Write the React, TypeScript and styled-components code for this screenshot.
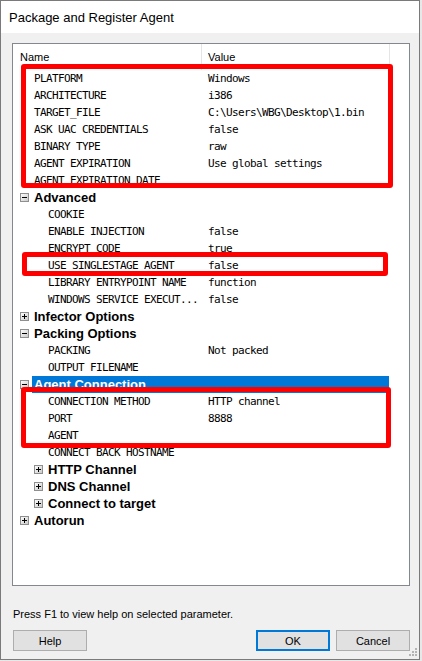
import React from 'react';
import styled, { createGlobalStyle } from 'styled-components';

const GlobalStyle = createGlobalStyle`
  html, body { margin: 0; padding: 0; background: #e8e8e8; }
  * { box-sizing: border-box; }
`;

const Stage = styled.div`
  position: relative;
  width: 422px;
  height: 661px;
  overflow: hidden;
  background: #e8e8e8;
`;

const Window = styled.div`
  position: relative;
  width: 420px;
  height: 660px;
  border: 1px solid #7a7a7a;
  background: #f0f0f0;
  display: flex;
  flex-direction: column;
  font-family: "Liberation Sans", Arial, sans-serif;
  color: #000;
`;

const TitleBar = styled.div`
  flex: none;
  height: 32px;
  background: #fff;
  display: flex;
  align-items: center;
  padding-left: 8px;
  font-size: 13px;
`;

const Body = styled.div`
  flex: 1;
  padding: 10px 9px 0 11px;
  display: flex;
  flex-direction: column;
`;

const Panel = styled.div`
  flex: none;
  height: 543px;
  border: 1px solid #828790;
  background: #fff;
  display: flex;
  flex-direction: column;
  overflow: hidden;
`;

const Header = styled.div`
  flex: none;
  display: flex;
  height: 26px;
  font-size: 11px;
  line-height: 13px;
`;

const HeaderCell = styled.div<{ $w?: number; $pad: number }>`
  ${p => (p.$w ? `width: ${p.$w}px;` : 'flex: 1;')}
  padding: 7px 0 0 ${p => p.$pad}px;
  border-right: ${p => (p.$w ? '1px solid #e5e5e5' : 'none')};
`;

const Row = styled.div<{ $level: number }>`
  flex: none;
  display: flex;
  height: 17px;
  padding-left: ${p => 7 + 14 * p.$level}px;
`;

const ToggleSlot = styled.div`
  flex: none;
  width: 12px;
  display: flex;
  align-items: center;
`;

const Cells = styled.div<{ $selected?: boolean }>`
  flex: 1;
  display: flex;
  padding-left: 2px;
  background: ${p => (p.$selected ? '#0078d7' : 'transparent')};
  color: ${p => (p.$selected ? '#fff' : '#000')};
`;

const NameText = styled.div<{ $category?: boolean }>`
  flex: 1;
  white-space: nowrap;
  overflow: visible;
  line-height: 17px;
  ${p =>
    p.$category
      ? `font-family: "Liberation Sans", Arial, sans-serif; font-weight: bold; font-size: 13px;`
      : `font-family: "DejaVu Sans Mono", "Liberation Mono", monospace; font-size: 11px; letter-spacing: -0.62px;`}
`;

const ValueText = styled.div`
  flex: none;
  width: 187px;
  padding-left: 6px;
  white-space: nowrap;
  line-height: 17px;
  font-family: "DejaVu Sans Mono", "Liberation Mono", monospace;
  font-size: 11px;
  letter-spacing: -0.62px;
`;

const TrailCol = styled.div`
  flex: none;
  width: 20px;
`;

const Hint = styled.div`
  margin-top: 21px;
  font-size: 11px;
  line-height: 14px;
  padding-left: 1px;
`;

const ButtonRow = styled.div`
  display: flex;
  gap: 6px;
  margin-top: 9px;
  padding-left: 1px;
  width: 398px;
`;

const Spacer = styled.div`
  flex: 1;
`;

const Button = styled.button<{ $default?: boolean }>`
  flex: none;
  width: 74px;
  height: 21px;
  padding: 0;
  background: #e1e1e1;
  border: 1px solid ${p => (p.$default ? '#0078d7' : '#adadad')};
  box-shadow: ${p => (p.$default ? 'inset 0 0 0 1px #0078d7' : 'none')};
  font-family: "Liberation Sans", Arial, sans-serif;
  font-size: 11px;
  color: #000;
`;

const Grip = styled.svg`
  position: absolute;
  right: 1px;
  bottom: 2px;
`;

const Mark = styled.div<{ $l: number; $t: number; $w: number; $h: number }>`
  position: absolute;
  left: ${p => p.$l}px;
  top: ${p => p.$t}px;
  width: ${p => p.$w}px;
  height: ${p => p.$h}px;
  border: 5px solid #ff0000;
  border-radius: 3px;
  pointer-events: none;
`;

const Expander: React.FC<{ open: boolean }> = ({ open }) => (
  <svg width="9" height="9" viewBox="0 0 9 9">
    <defs>
      <linearGradient id="expg" x1="0" y1="0" x2="1" y2="1">
        <stop offset="0" stopColor="#ffffff" />
        <stop offset="1" stopColor="#c8c8c8" />
      </linearGradient>
    </defs>
    <rect x="0.5" y="0.5" width="8" height="8" fill="url(#expg)" stroke="#8f8f8f" />
    <path d="M2 4.5h5" stroke="#000" strokeWidth="1" />
    {!open && <path d="M4.5 2v5" stroke="#000" strokeWidth="1" />}
  </svg>
);

type Item =
  | { kind: 'prop'; level: number; name: string; value?: string }
  | { kind: 'cat'; level: number; name: string; open: boolean; selected?: boolean };

const items: Item[] = [
  { kind: 'prop', level: 0, name: 'PLATFORM', value: 'Windows' },
  { kind: 'prop', level: 0, name: 'ARCHITECTURE', value: 'i386' },
  { kind: 'prop', level: 0, name: 'TARGET_FILE', value: 'C:\\Users\\WBG\\Desktop\\1.bin' },
  { kind: 'prop', level: 0, name: 'ASK UAC CREDENTIALS', value: 'false' },
  { kind: 'prop', level: 0, name: 'BINARY TYPE', value: 'raw' },
  { kind: 'prop', level: 0, name: 'AGENT EXPIRATION', value: 'Use global settings' },
  { kind: 'prop', level: 0, name: 'AGENT EXPIRATION DATE', value: '' },
  { kind: 'cat', level: 0, name: 'Advanced', open: true },
  { kind: 'prop', level: 1, name: 'COOKIE', value: '' },
  { kind: 'prop', level: 1, name: 'ENABLE INJECTION', value: 'false' },
  { kind: 'prop', level: 1, name: 'ENCRYPT CODE', value: 'true' },
  { kind: 'prop', level: 1, name: 'USE SINGLESTAGE AGENT', value: 'false' },
  { kind: 'prop', level: 1, name: 'LIBRARY ENTRYPOINT NAME', value: 'function' },
  { kind: 'prop', level: 1, name: 'WINDOWS SERVICE EXECUT...', value: 'false' },
  { kind: 'cat', level: 0, name: 'Infector Options', open: false },
  { kind: 'cat', level: 0, name: 'Packing Options', open: true },
  { kind: 'prop', level: 1, name: 'PACKING', value: 'Not packed' },
  { kind: 'prop', level: 1, name: 'OUTPUT FILENAME', value: '' },
  { kind: 'cat', level: 0, name: 'Agent Connection', open: true, selected: true },
  { kind: 'prop', level: 1, name: 'CONNECTION METHOD', value: 'HTTP channel' },
  { kind: 'prop', level: 1, name: 'PORT', value: '8888' },
  { kind: 'prop', level: 1, name: 'AGENT', value: '' },
  { kind: 'prop', level: 1, name: 'CONNECT BACK HOSTNAME', value: '' },
  { kind: 'cat', level: 1, name: 'HTTP Channel', open: false },
  { kind: 'cat', level: 1, name: 'DNS Channel', open: false },
  { kind: 'cat', level: 1, name: 'Connect to target', open: false },
  { kind: 'cat', level: 0, name: 'Autorun', open: false },
];

export default function App() {
  return (
    <Stage>
      <GlobalStyle />
      <Window>
        <TitleBar>Package and Register Agent</TitleBar>
        <Body>
          <Panel>
            <Header>
              <HeaderCell $w={189} $pad={7}>Name</HeaderCell>
              <HeaderCell $w={188} $pad={6}>Value</HeaderCell>
              <HeaderCell $pad={0} />
            </Header>
            {items.map((it, i) => (
              <Row key={i} $level={it.level}>
                <ToggleSlot>{it.kind === 'cat' && <Expander open={it.open} />}</ToggleSlot>
                <Cells $selected={it.kind === 'cat' && it.selected}>
                  <NameText $category={it.kind === 'cat'}>{it.name}</NameText>
                  <ValueText>{it.kind === 'prop' ? it.value : ''}</ValueText>
                </Cells>
                <TrailCol />
              </Row>
            ))}
          </Panel>
          <Hint>Press F1 to view help on selected parameter.</Hint>
          <ButtonRow>
            <Button>Help</Button>
            <Spacer />
            <Button $default>OK</Button>
            <Button>Cancel</Button>
          </ButtonRow>
        </Body>
        <Grip width="10" height="10" viewBox="0 0 10 10">
          <g fill="#b4b4b4">
            <rect x="7" y="1" width="2" height="2" />
            <rect x="4" y="4" width="2" height="2" />
            <rect x="7" y="4" width="2" height="2" />
            <rect x="1" y="7" width="2" height="2" />
            <rect x="4" y="7" width="2" height="2" />
            <rect x="7" y="7" width="2" height="2" />
          </g>
        </Grip>
      </Window>
      <Mark $l={21} $t={64} $w={372} $h={124} />
      <Mark $l={22} $t={252} $w={366} $h={24} />
      <Mark $l={21} $t={387} $w={370} $h={61} />
    </Stage>
  );
}
